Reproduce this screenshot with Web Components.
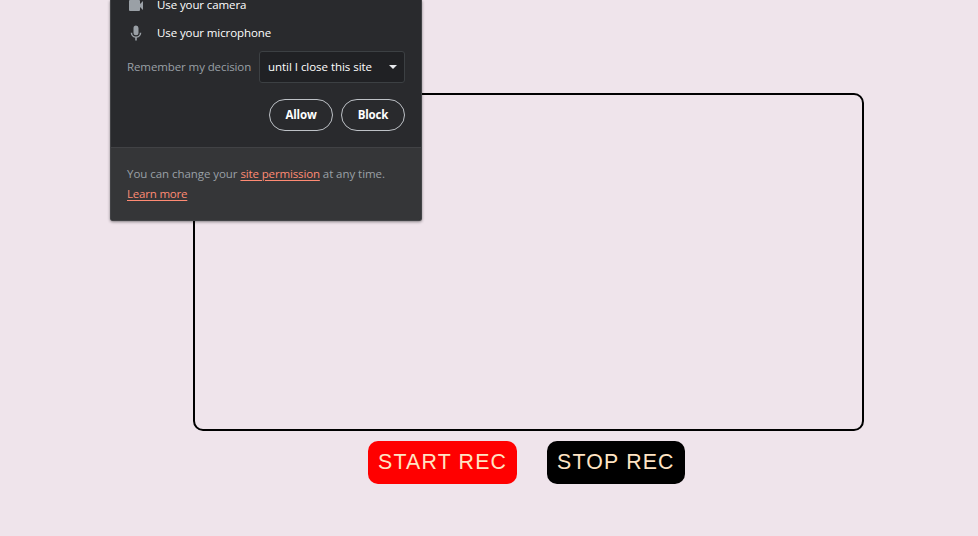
<!DOCTYPE html>
<html lang="en">
<head>
<meta charset="utf-8">
<title>Recorder</title>
<style>
html, body { margin: 0; height: 100%; }
body { background: #efe4eb; overflow: hidden; }
</style>
</head>
<body>
<recorder-page></recorder-page>
<script>
const define = (name, html) => {
  const template = document.createElement('template');
  template.innerHTML = html;
  customElements.define(name, class extends HTMLElement {
    constructor() {
      super();
      this.attachShadow({ mode: 'open' }).append(template.content.cloneNode(true));
    }
  });
};

define('rec-button', `
<style>
:host { display: block; }
button { display: block; box-sizing: border-box; width: var(--w); height: 43px; padding: 0 0 2px 10px; border: 0; border-radius: 10px; background: var(--bg); color: bisque; font: 21.3px/41px "Liberation Sans", Arial, sans-serif; letter-spacing: var(--ls); text-align: left; white-space: nowrap; }
span { display: block; padding-top: 1px; }
</style><button><span><slot></slot></span></button>`);

define('pill-button', `
<style>
:host { display: block; }
button { display: block; box-sizing: border-box; width: 64px; height: 32px; padding: 0; border: 1px solid #bdc1c6; border-radius: 16px; background: none; color: #fff; font: 700 11.5px/30px "Open Sans", "Noto Sans", sans-serif; letter-spacing: -0.15px; text-align: center; }
</style><button><slot></slot></button>`);

define('permission-row', `
<style>
:host { display: flex; align-items: center; height: 28px; gap: 13px; color: #fff; }
::slotted(svg) { display: block; width: 17px; height: 16px; fill: #9aa0a6; }
</style><slot name="icon"></slot><span><slot></slot></span>`);

define('decision-select', `
<style>
:host { display: flex; box-sizing: border-box; width: 146px; height: 32px; padding: 0 7px 0 8px; align-items: center; justify-content: space-between; border: 1px solid #3c4043; border-radius: 3px; background: #202124; color: #fff; letter-spacing: -0.04px; white-space: nowrap; }
svg { display: block; fill: #e8eaed; }
</style><span><slot></slot></span><svg width="8" height="4" viewBox="0 0 8 4"><path d="M0 0h8L4 4z"/></svg>`);

define('permission-bubble', `
<style>
:host { display: block; box-sizing: border-box; width: 312px; height: 221px; border: 1px solid #424346; border-top: 0; border-radius: 0 0 3px 3px; overflow: hidden; background: #292a2d; box-shadow: 0 1px 3px rgba(0,0,0,.45); color: #9aa0a6; font: 11.5px/20px "Open Sans", "Noto Sans", sans-serif; letter-spacing: -0.1px; }
.main { display: flow-root; box-sizing: border-box; height: 147px; padding: 0 16px; }
.rows { margin-top: -9px; }
.decision { display: flex; align-items: center; justify-content: space-between; margin-top: 4px; white-space: nowrap; }
.actions { display: flex; justify-content: flex-end; gap: 8px; margin-top: 16px; }
.foot { box-sizing: border-box; height: 73px; padding: 16px 16px 0; border-top: 1px solid #414245; background: #353638; white-space: nowrap; }
.note { letter-spacing: -0.05px; }
.note a { letter-spacing: -0.14px; }
.more { letter-spacing: -0.2px; }
a { color: #ff8b74; text-decoration: underline; text-underline-offset: 1.5px; text-decoration-thickness: 1px; }
</style>
<div class="main">
  <div class="rows">
    <permission-row><svg slot="icon" viewBox="0 0 17 16"><path d="M3 3h9q1 0 1 1v3l3-3v9l-3-3v3q0 1-1 1H3q-1 0-1-1V4q0-1 1-1z"/></svg>Use your camera</permission-row>
    <permission-row><svg slot="icon" viewBox="0 0 17 16"><path d="M9 10.200a2.500 2.500 0 0 0 2.500-2.500V3a2.500 2.500 0 0 0-5 0v4.700A2.500 2.500 0 0 0 9 10.200zM12.800 7.700a3.800 3.800 0 0 1-7.600 0H3.700c0 2.600 1.900 4.700 4.500 5.100V15.500h1.600v-2.700c2.600-.4 4.500-2.500 4.500-5.100z"/></svg>Use your microphone</permission-row>
  </div>
  <div class="decision"><span>Remember my decision</span><decision-select>until I close this site</decision-select></div>
  <div class="actions"><pill-button>Allow</pill-button><pill-button>Block</pill-button></div>
</div>
<div class="foot"><div class="note">You can change your <a>site permission</a> at any time.</div><div class="more"><a>Learn more</a></div></div>`);

define('recorder-page', `
<style>
:host { display: block; position: relative; height: 536px; overflow: hidden; }
.stage { display: flex; flex-direction: column; padding: 93px 0 0 193px; }
.video { box-sizing: border-box; width: 671px; height: 338px; border: 2px solid #000; border-radius: 10px; }
.controls { display: flex; gap: 30px; margin: 10px 0 0 175px; }
.start { --bg: #f00; --w: 149px; --ls: 1.2px; }
.stop { --bg: #000; --w: 138px; --ls: 1.2px; }
permission-bubble { position: absolute; left: 110px; top: 0; }
</style>
<div class="stage">
  <div class="video"></div>
  <div class="controls"><rec-button class="start">START REC</rec-button><rec-button class="stop">STOP REC</rec-button></div>
</div>
<permission-bubble></permission-bubble>`);
</script>
</body>
</html>
